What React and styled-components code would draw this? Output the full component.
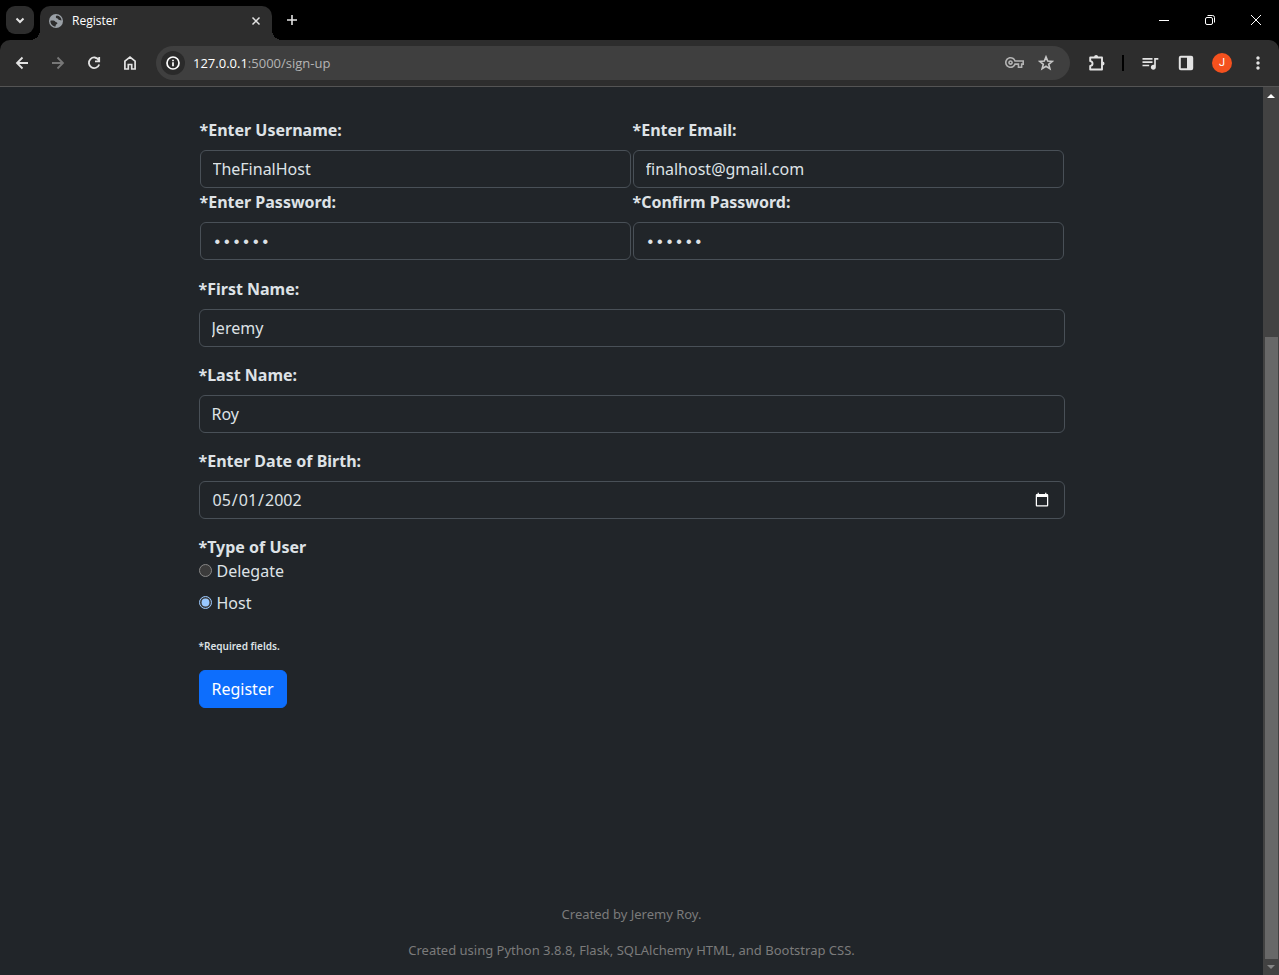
import React from "react";
import styled, { createGlobalStyle, css } from "styled-components";
import { MdOutlineVpnKey, MdStarBorder, MdQueueMusic, MdMoreVert } from "react-icons/md";

const GlobalStyle = createGlobalStyle`
  *, *::before, *::after { box-sizing: border-box; }
  body { margin: 0; background: #212529; color-scheme: dark; }
  button, input { font: inherit; color: inherit; }
`;

const Browser = styled.div`
  display: flex;
  flex-direction: column;
  min-height: 100vh;
  background: #000;
  color: #fff;
  font-family: "Open Sans", "Noto Sans", sans-serif;
`;

const TabStrip = styled.header`
  display: flex;
  align-items: flex-end;
  height: 40px;
  padding-left: 6px;
`;

const IconButton = styled.button`
  display: flex;
  flex: none;
  align-items: center;
  justify-content: center;
  width: ${(p) => p.$width || 28}px;
  height: ${(p) => p.$height || 28}px;
  padding: 0;
  border: 0;
  border-radius: ${(p) => p.$radius || 0}px;
  background: ${(p) => p.$fill || "transparent"};
  color: ${(p) => p.$color || "#e3e3e3"};
  svg { display: block; }
`;

const TabSearch = styled(IconButton)`
  align-self: center;
`;

const Tab = styled.div`
  position: relative;
  display: flex;
  align-items: center;
  width: 232px;
  height: 34px;
  margin-left: 6px;
  padding: 0 6px 5px 9px;
  border-radius: 10px 10px 0 0;
  background: #2d2d2d;
  font-size: 12px;
  line-height: 16px;

  &::before, &::after {
    content: "";
    position: absolute;
    bottom: 0;
    width: 10px;
    height: 10px;
  }
  &::before {
    right: 100%;
    background: radial-gradient(circle at 0 0, transparent 10px, #2d2d2d 10px);
  }
  &::after {
    left: 100%;
    background: radial-gradient(circle at 100% 0, transparent 10px, #2d2d2d 10px);
  }
`;

const TabTitle = styled.span`
  flex: 1;
  margin-left: 9px;
`;

const NewTab = styled(IconButton)`
  align-self: center;
  margin-left: 6px;
`;

const WindowControls = styled.div`
  display: flex;
  align-self: stretch;
  margin-left: auto;
`;

const Toolbar = styled.nav`
  display: flex;
  align-items: center;
  height: 47px;
  padding: 0 7px 1px 8px;
  border-bottom: 1px solid #545454;
  border-radius: 10px 10px 0 0;
  background: #2d2d2d;
`;

const NavButtons = styled.div`
  display: flex;
  gap: 8px;
`;

const AddressBar = styled.div`
  display: flex;
  flex: 1;
  align-items: center;
  gap: 4px;
  height: 34px;
  margin-left: 12px;
  padding: 0 10px 0 5px;
  border-radius: 17px;
  background: #3f3f3f;
`;

const Address = styled.div`
  flex: 1;
  margin-left: 4px;
  color: #b4b4b4;
  font-size: 13px;
  line-height: 20px;
`;

const Host = styled.span`
  color: #fff;
`;

const ToolbarActions = styled.div`
  display: flex;
  align-items: center;
  gap: 8px;
  margin-left: 13px;
`;

const Divider = styled.span`
  width: 2px;
  height: 16px;
  margin: 0 4px 0 3px;
  background: #000;
`;

const Avatar = styled.span`
  width: 20px;
  height: 20px;
  border-radius: 50%;
  background: #f4511e;
  color: #fff;
  font-family: Roboto, sans-serif;
  font-size: 11px;
  line-height: 20px;
  text-align: center;
`;

const Viewport = styled.div`
  display: flex;
  flex: 1;
`;

const Page = styled.div`
  display: flex;
  flex: 1;
  flex-direction: column;
  align-items: center;
  padding: 31px 24px 15px;
  background: #212529;
  color: #dee2e6;
  font-family: "Noto Sans", "Open Sans", sans-serif;
  font-size: 16px;
  line-height: 24px;
`;

const Form = styled.form`
  display: flex;
  flex-direction: column;
  gap: 16px;
  width: 100%;
  max-width: 866px;
`;

const Credentials = styled.div`
  display: grid;
  grid-template-columns: 1fr 1fr;
  gap: 2px;
  padding: 0 1px 1px;
`;

const Field = styled.div`
  display: flex;
  flex-direction: column;
  gap: 8px;
`;

const heading = css`
  font-size: 16px;
  font-weight: 700;
  line-height: 24px;
`;

const Label = styled.label`
  ${heading}
`;

const Input = styled.input`
  width: 100%;
  height: 38px;
  padding: 6px 12px;
  border: 1px solid #495057;
  border-radius: 6px;
  outline: 0;
  background: #212529;

  &[type="password"] {
    padding: 8px 12px 4px;
    font-family: "Liberation Mono", monospace;
  }
`;

const UserType = styled.fieldset`
  margin: 0;
  padding: 0;
  border: 0;
`;

const Legend = styled.legend`
  ${heading}
  padding: 0;
`;

const Choice = styled.label`
  display: flex;
  align-items: center;
  gap: 5px;
  height: 24px;
  margin-bottom: 8px;
`;

const Radio = styled.input`
  width: 13px;
  height: 13px;
  margin: 0 0 2px;
`;

const Note = styled.p`
  margin: 0;
  font-size: 10px;
  font-weight: 600;
  line-height: 15px;
`;

const Submit = styled.button`
  align-self: flex-start;
  height: 38px;
  padding: 0 12px;
  border: 1px solid #0d6efd;
  border-radius: 6px;
  background: #0d6efd;
  color: #fff;
`;

const Footer = styled.footer`
  margin-top: auto;
  color: #7b7b7b;
  font-size: 13px;
  line-height: 20px;
  text-align: center;
`;

const Credit = styled.p`
  margin: 16px 0 0;
`;

const Scrollbar = styled.div`
  display: flex;
  flex: none;
  flex-direction: column;
  align-items: center;
  width: 16px;
  background: #424242;
`;

const Track = styled.div`
  display: flex;
  flex: 1;
  flex-direction: column;
  width: 13px;
`;

const Before = styled.div`
  flex: 233;
`;

const Thumb = styled.div`
  flex: 622;
  background: #686868;
`;

const Stroke = ({ size = 16, d, width = 2, cap = "butt" }) => (
  <svg width={size} height={size} viewBox={`0 0 ${size} ${size}`} fill="none" stroke="currentColor" strokeWidth={width} strokeLinecap={cap}>
    <path d={d} />
  </svg>
);

const Globe = () => (
  <svg width="14" height="14" viewBox="0 0 14 14">
    <circle cx="7" cy="7" r="7" fill="#9aa0a6" />
    <path d="M7.800 1.500C6.800 2.200 6.600 3 7.200 3.900C8 4.600 9 4.300 9.300 5.300C9.800 6.500 11.300 6.200 12.500 6.400C12.600 4.200 10.800 1.800 7.800 1.500Z" fill="#2d2d2d" />
    <path d="M1.400 6.700C3.300 6.300 5.600 6.300 6.200 7.600C6.500 8.500 8.200 8.200 8.400 9.300C8.500 10.300 6.900 10.300 6.700 11.200L6.600 12.600C3.600 12.500 1.300 9.800 1.400 6.700Z" fill="#2d2d2d" />
  </svg>
);

const TextField = ({ id, label, ...rest }) => (
  <Field>
    <Label htmlFor={id}>{label}</Label>
    <Input id={id} name={id} {...rest} />
  </Field>
);

export default function App() {
  return (
    <>
      <GlobalStyle />
      <Browser>
        <TabStrip>
          <TabSearch $fill="#2d2d2d" $radius={9} aria-label="Search tabs">
            <Stroke d="M4.500 6.500L8 10L11.500 6.500" />
          </TabSearch>
          <Tab>
            <Globe />
            <TabTitle>Register</TabTitle>
            <IconButton $width={20} $height={20} aria-label="Close tab">
              <Stroke width={1.5} d="M4.500 4.500L11.500 11.500M11.500 4.500L4.500 11.500" />
            </IconButton>
          </Tab>
          <NewTab aria-label="New tab">
            <Stroke width={1.6} d="M8 3V13M3 8H13" />
          </NewTab>
          <WindowControls>
            <IconButton $width={46} $height={40} $color="#fff" aria-label="Minimize">
              <Stroke size={10} width={1} d="M0 5.500H10" />
            </IconButton>
            <IconButton $width={46} $height={40} $color="#fff" aria-label="Restore">
              <Stroke size={10} width={1} d="M2 2.500H6Q7.500 2.500 7.500 4V8Q7.500 9.500 6 9.500H2Q0.500 9.500 0.500 8V4Q0.500 2.500 2 2.500ZM2.500 0.500H7.500Q9.500 0.500 9.500 2.500V7.500" />
            </IconButton>
            <IconButton $width={46} $height={40} $color="#fff" aria-label="Close">
              <Stroke size={12} width={1} d="M1 1L11 11M11 1L1 11" />
            </IconButton>
          </WindowControls>
        </TabStrip>

        <Toolbar>
          <NavButtons>
            <IconButton aria-label="Back">
              <Stroke width={1.8} d="M14 8H3.500M8.500 2.500L3 8L8.500 13.500" />
            </IconButton>
            <IconButton $color="#777" aria-label="Forward">
              <Stroke width={1.8} d="M2 8H12.500M7.500 2.500L13 8L7.500 13.500" />
            </IconButton>
            <IconButton aria-label="Reload">
              <Stroke width={1.8} d="M12.700 5A5.300 5.300 0 1 0 13.200 9.500M13.200 2V6.300H9" />
            </IconButton>
            <IconButton aria-label="Home">
              <Stroke width={1.7} d="M2.900 14V6.200L8 2.200L13.100 6.200V14H9.700V9.500H6.300V14Z" />
            </IconButton>
          </NavButtons>
          <AddressBar>
            <IconButton $width={24} $height={24} $radius={12} $fill="#2a2a2a" $color="#fff" aria-label="Site information">
              <Stroke width={1.7} d="M8 2A6 6 0 1 1 8 14A6 6 0 1 1 8 2M8 7.300V11.200M8 4.700V6.300" />
            </IconButton>
            <Address><Host>127.0.0.1</Host>:5000/sign-up</Address>
            <IconButton $color="#b4b4b4" aria-label="Saved passwords">
              <MdOutlineVpnKey size={19} />
            </IconButton>
            <IconButton $color="#c7c7c7" aria-label="Bookmark">
              <Stroke width={1.6} d="M8 1.900L9.700 6.100L14.200 6.400L10.700 9.300L11.900 13.700L8 11.300L4.100 13.700L5.300 9.300L1.800 6.400L6.300 6.100Z" />
            </IconButton>
          </AddressBar>
          <ToolbarActions>
            <IconButton aria-label="Extensions">
              <svg width="18" height="18" viewBox="0 0 18 18">
                <path d="M2.200 3.500H14V15.500H2.200V11.900C5.300 11.700 5.300 7.300 2.200 7.100Z" fill="none" stroke="currentColor" strokeWidth="1.900" strokeLinejoin="round" />
                <path d="M6.100 3A2 2 0 0 1 10.100 3ZM14.500 7.500A2 2 0 0 1 14.500 11.500Z" fill="currentColor" />
              </svg>
            </IconButton>
            <Divider />
            <IconButton aria-label="Media"><MdQueueMusic size={20} /></IconButton>
            <IconButton aria-label="Side panel">
              <svg width="16" height="16" viewBox="0 0 16 16">
                <rect x="1.800" y="1.800" width="12.400" height="12.400" fill="none" stroke="currentColor" strokeWidth="2" rx="1" />
                <path d="M9 2H14V14H9Z" fill="currentColor" />
              </svg>
            </IconButton>
            <IconButton aria-label="Profile"><Avatar>J</Avatar></IconButton>
            <IconButton aria-label="Menu"><MdMoreVert size={20} /></IconButton>
          </ToolbarActions>
        </Toolbar>

        <Viewport>
          <Page>
            <Form onSubmit={(e) => e.preventDefault()}>
              <Credentials>
                <TextField id="username" label="*Enter Username:" type="text" defaultValue="TheFinalHost" />
                <TextField id="email" label="*Enter Email:" type="email" defaultValue="finalhost@gmail.com" />
                <TextField id="password" label="*Enter Password:" type="password" defaultValue="secret" />
                <TextField id="confirm" label="*Confirm Password:" type="password" defaultValue="secret" />
              </Credentials>
              <TextField id="first-name" label="*First Name:" type="text" defaultValue="Jeremy" />
              <TextField id="last-name" label="*Last Name:" type="text" defaultValue="Roy" />
              <TextField id="birth" label="*Enter Date of Birth:" type="date" defaultValue="2002-05-01" />
              <UserType>
                <Legend>*Type of User</Legend>
                <Choice><Radio type="radio" name="user-type" value="delegate" />Delegate</Choice>
                <Choice><Radio type="radio" name="user-type" value="host" defaultChecked />Host</Choice>
              </UserType>
              <Note>*Required fields.</Note>
              <Submit type="submit">Register</Submit>
            </Form>
            <Footer>
              <Credit>Created by Jeremy Roy.</Credit>
              <Credit>Created using Python 3.8.8, Flask, SQLAlchemy HTML, and Bootstrap CSS.</Credit>
            </Footer>
          </Page>
          <Scrollbar aria-hidden="true">
            <svg width="16" height="17" viewBox="0 0 16 17"><path d="M4 11L8 7L12 11Z" fill="#fff" /></svg>
            <Track><Before /><Thumb /></Track>
            <svg width="16" height="16" viewBox="0 0 16 16"><path d="M4 6L8 10L12 6Z" fill="#868686" /></svg>
          </Scrollbar>
        </Viewport>
      </Browser>
    </>
  );
}
